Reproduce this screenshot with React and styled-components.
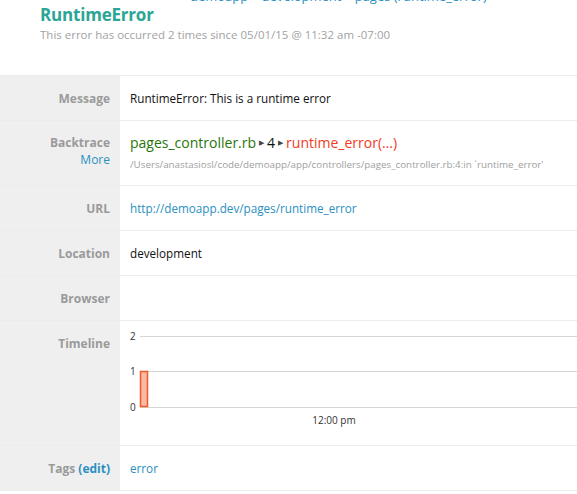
import React from 'react';
import styled, { createGlobalStyle } from 'styled-components';

const GlobalStyle = createGlobalStyle`
  body {
    margin: 0;
    background: #fff;
    font-family: "Open Sans", "Noto Sans", sans-serif;
    color: #222;
  }
`;

const Header = styled.div`
  padding: 0 0 0 40px;
  height: 75px;
  overflow: hidden;
`;

const Crumbs = styled.div`
  margin-top: -12px;
  height: 17px;
  font-size: 13px;
  line-height: 16px;
  color: #2b8fc0;
  padding-left: 150px;
`;

const Title = styled.h1`
  margin: 0;
  font-size: 17px;
  font-weight: 700;
  color: #2aa596;
  line-height: 20px;
  letter-spacing: -0.2px;
`;

const Subtitle = styled.div`
  font-size: 11.5px;
  color: #a2a2a2;
  margin-top: 2px;
`;

const Table = styled.div`
  border-top: 1px solid #ececec;
`;

const Row = styled.div`
  display: grid;
  grid-template-columns: 120px 1fr;
  min-height: ${(p) => p.h || 44}px;
  border-bottom: 1px solid #ececec;
`;

const Label = styled.div`
  background: #efefef;
  text-align: right;
  padding: ${(p) => p.top ?? 14}px 10px 0 0;
  font-size: 12px;
  font-weight: 700;
  color: #9a9a9a;
  line-height: 17px;
`;

const Value = styled.div`
  padding: ${(p) => p.top ?? 14}px 10px 0 10px;
  font-size: 11.7px;
  line-height: 17px;
  color: ${(p) => p.color || '#111'};
`;

const Link = styled.span`
  color: #2b8fc0;
  font-weight: ${(p) => (p.plain ? 400 : 'inherit')};
`;

const TraceLine = styled.div`
  font-size: 14px;
  line-height: 18px;
  display: flex;
  align-items: center;
  gap: 3px;
`;

const File = styled.span`
  color: #2a760a;
`;

const Method = styled.span`
  color: #f23a1c;
`;

const Arrow = styled.span`
  font-size: 7px;
  color: #444;
`;

const Path = styled.div`
  font-size: 9.8px;
  color: #a0a0a0;
  margin-top: 4px;
`;

const Chart = styled.svg`
  display: block;
  margin-left: -10px;
`;

const Timeline = () => (
  <Chart width="457" height="110">
    {[
      [15, '2'],
      [50, '1'],
      [86, '0'],
    ].map(([y, t]) => (
      <g key={t}>
        <line x1="20" x2="457" y1={y + 0.5} y2={y + 0.5} stroke="#d6d6d6" strokeWidth="1" />
        <text x="10" y={y + 4} fontSize="10" fill="#333" fontFamily="Open Sans, sans-serif">
          {t}
        </text>
      </g>
    ))}
    <rect x="20.5" y="50.5" width="7" height="35" fill="#f9bba4" stroke="#f05a2a" strokeWidth="1.5" />
    <text x="214" y="103" fontSize="10" fill="#333" textAnchor="middle" fontFamily="Open Sans, sans-serif">
      12:00 pm
    </text>
  </Chart>
);

export default function App() {
  return (
    <>
      <GlobalStyle />
      <Header>
        <Crumbs>demoapp » development » pages (runtime_error)</Crumbs>
        <Title>RuntimeError</Title>
        <Subtitle>This error has occurred 2 times since 05/01/15 @ 11:32 am -07:00</Subtitle>
      </Header>
      <Table>
        <Row>
          <Label>Message</Label>
          <Value>RuntimeError: This is a runtime error</Value>
        </Row>
        <Row h={64}>
          <Label top={13}>
            Backtrace
            <div>
              <Link plain>More</Link>
            </div>
          </Label>
          <Value top={13}>
            <TraceLine>
              <File>pages_controller.rb</File>
              <Arrow>▶</Arrow>
              <span>4</span>
              <Arrow>▶</Arrow>
              <Method>runtime_error(…)</Method>
            </TraceLine>
            <Path>/Users/anastasiosl/code/demoapp/app/controllers/pages_controller.rb:4:in `runtime_error'</Path>
          </Value>
        </Row>
        <Row>
          <Label>URL</Label>
          <Value>
            <Link>http://demoapp.dev/pages/runtime_error</Link>
          </Value>
        </Row>
        <Row>
          <Label>Location</Label>
          <Value>development</Value>
        </Row>
        <Row>
          <Label>Browser</Label>
          <Value />
        </Row>
        <Row h={124}>
          <Label>Timeline</Label>
          <Value top={0}>
            <Timeline />
          </Value>
        </Row>
        <Row>
          <Label>
            Tags <Link>(edit)</Link>
          </Label>
          <Value>
            <Link>error</Link>
          </Value>
        </Row>
      </Table>
    </>
  );
}
